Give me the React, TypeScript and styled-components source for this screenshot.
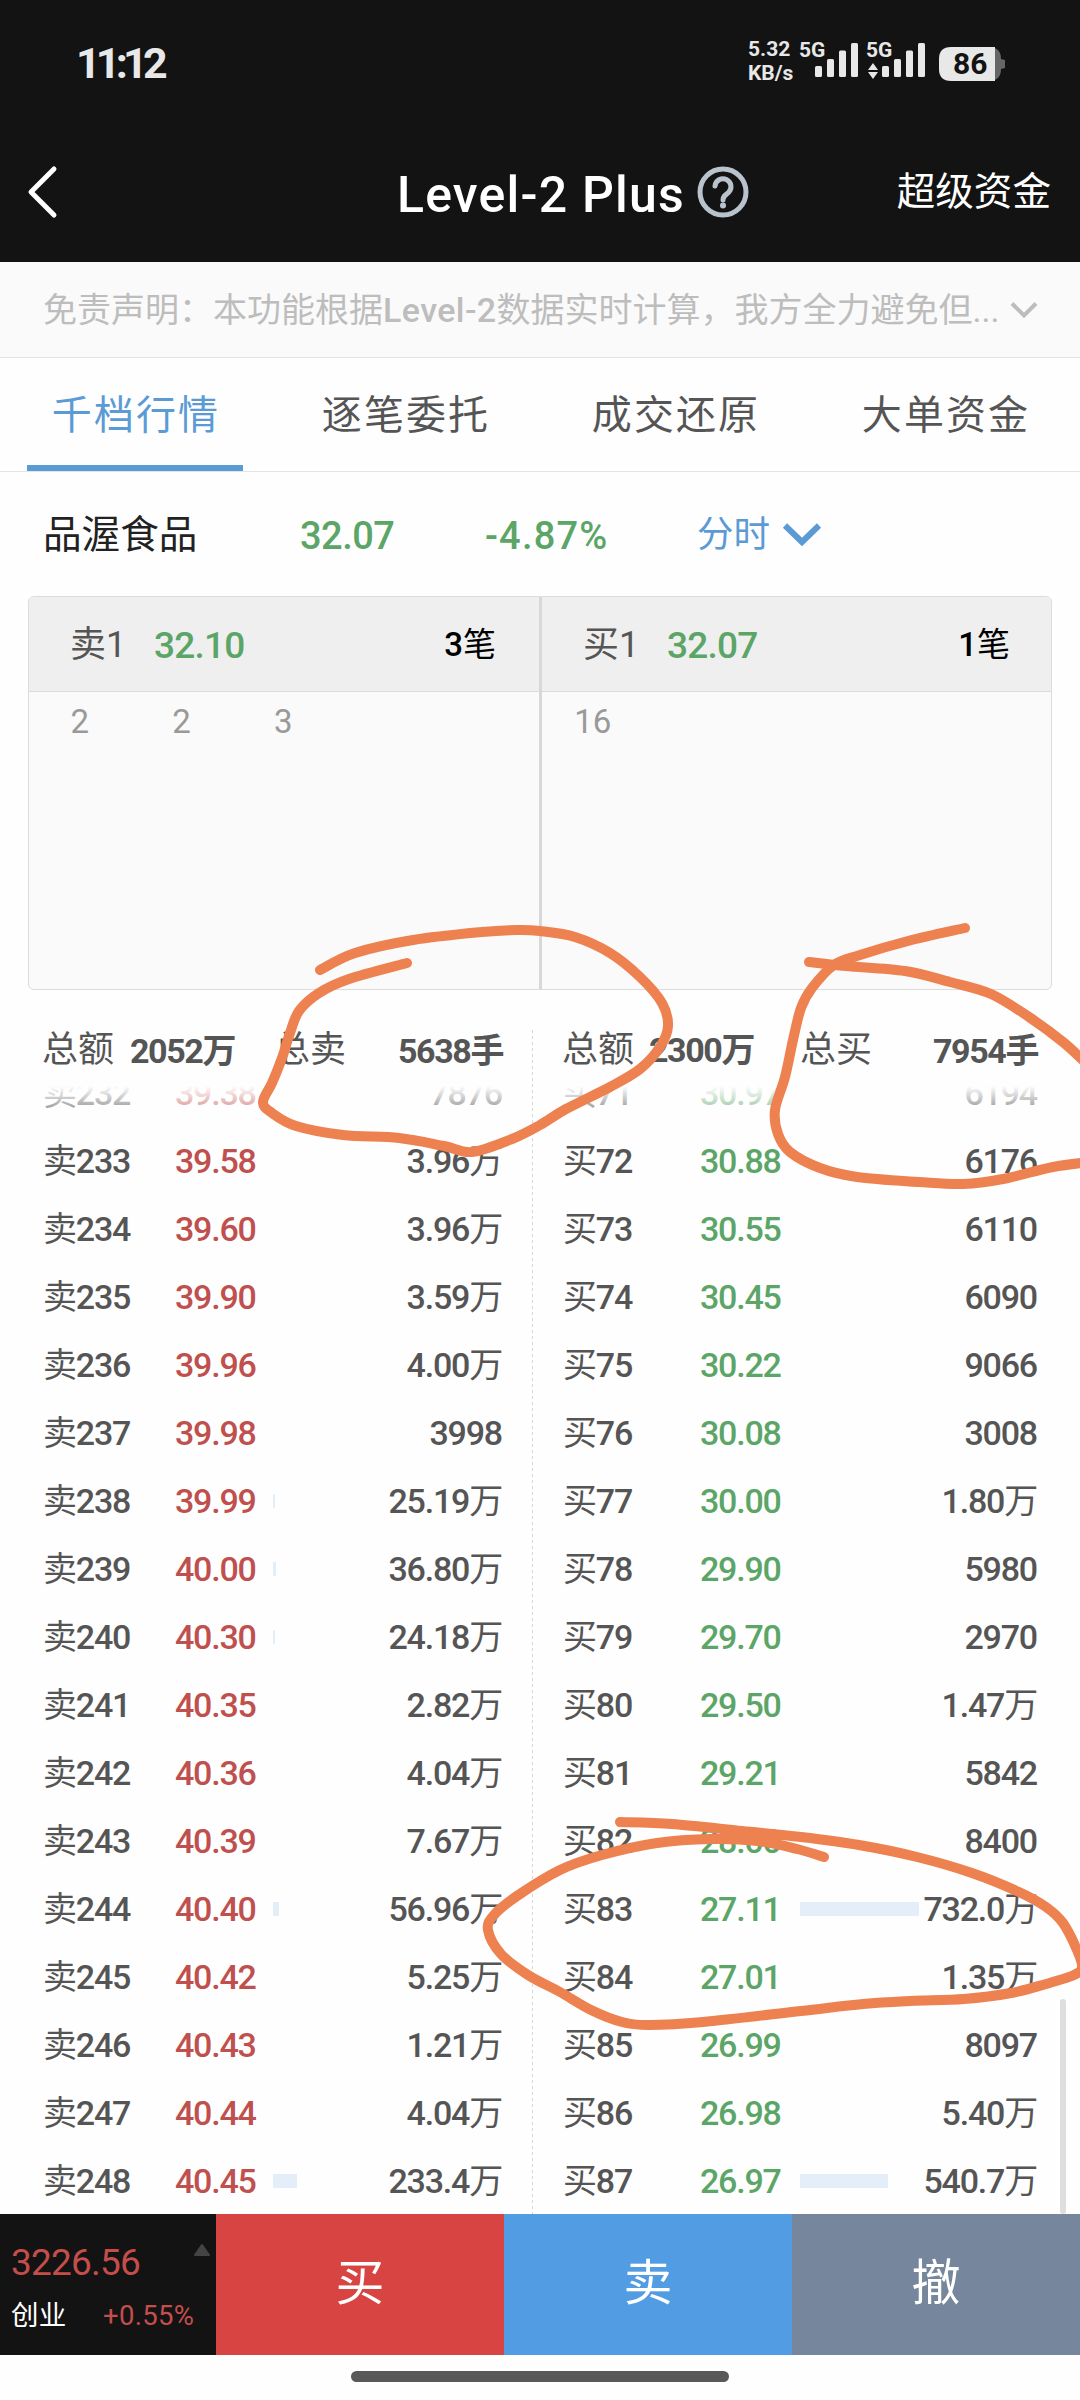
import React from "react";
import styled, { createGlobalStyle } from "styled-components";

const INK = "#555555";
const GREEN = "#5ba567";
const RED = "#bf504d";
const BLUE = "#5b9bd5";
const DARK = "#131313";

const GlobalStyle = createGlobalStyle`
  * { box-sizing: border-box; }
  body {
    margin: 0;
    background: #fefefe;
    font-family: Roboto, "Noto Sans CJK SC", sans-serif;
    line-height: 1.2;
    color: ${INK};
  }
`;

const Screen = styled.div`
  position: relative;
  width: 1080px;
  height: 2400px;
  overflow: hidden;
  display: flex;
  flex-direction: column;
  background: #fefefe;
  white-space: nowrap;
`;

/* Chinese characters set lighter than the digits beside them. */
const Han = styled.span`
  font-weight: 400;
`;

/* ---------- status bar ---------- */

const StatusBar = styled.header`
  height: 128px;
  flex: none;
  display: flex;
  align-items: center;
  padding: 0 76px 0 76px;
  background: ${DARK};
  color: #e8e8e8;
`;

const Clock = styled.div`
  flex: 1;
  font-size: 43px;
  font-weight: 700;
  letter-spacing: -4.8px;
`;

const NetSpeed = styled.div`
  width: 51px;
  height: 52px;
  font-size: 21px;
  font-weight: 700;
  line-height: 23.5px;
`;

const Signal = styled.div<{ $w: number }>`
  position: relative;
  width: ${(p) => p.$w}px;
  height: 50px;
  font-size: 21px;
  font-weight: 700;
  line-height: 23px;
  svg {
    position: absolute;
    left: 0;
    top: 0;
  }
`;

const Battery = styled.div`
  position: relative;
  width: 65px;
  height: 34px;
  display: flex;
  align-items: center;
  padding-left: 14px;
  font-size: 30px;
  font-weight: 700;
  color: ${DARK};
  svg {
    position: absolute;
    left: 0;
    top: 0;
  }
  span {
    position: relative;
  }
`;

/* ---------- navigation ---------- */

const NavBar = styled.nav`
  height: 134px;
  flex: none;
  display: flex;
  align-items: center;
  padding: 0 29px 6px 26px;
  background: ${DARK};
  color: #ffffff;
`;

const BackIcon = styled.svg`
  width: 34px;
  height: 56px;
`;

const Title = styled.h1`
  margin: 6px 0 0 337px;
  width: 300px;
  font-size: 50px;
  font-weight: 500;
  letter-spacing: 1.2px;
`;

const NavLink = styled.a`
  margin-left: auto;
  font-size: 38.6px;
`;

/* ---------- disclaimer ---------- */

const Disclaimer = styled.div`
  height: 96px;
  flex: none;
  display: flex;
  align-items: center;
  padding: 1px 42px 0 43px;
  background: #fafafa;
  border-bottom: 1px solid #e4e4e4;
  color: #bdbdbd;
  font-size: 34px;
  svg {
    margin-left: auto;
  }
`;

const Latin = styled.span`
  font-weight: 500;
  letter-spacing: 0.4px;
`;

/* ---------- tabs ---------- */

const Tabs = styled.div`
  height: 114px;
  flex: none;
  display: grid;
  grid-template-columns: repeat(4, 1fr);
  border-bottom: 1px solid #e4e4e4;
`;

const Tab = styled.div<{ $active?: boolean }>`
  margin: 0 27px;
  display: flex;
  align-items: center;
  justify-content: center;
  padding-top: ${(p) => (p.$active ? "8px" : "2px")};
  padding-left: 2px;
  border-bottom: ${(p) => (p.$active ? `6px solid ${BLUE}` : "none")};
  color: ${(p) => (p.$active ? BLUE : INK)};
  font-size: 40px;
  letter-spacing: 2.1px;
`;

/* ---------- quote line ---------- */

const Quote = styled.div`
  height: 124px;
  flex: none;
  display: flex;
  align-items: center;
  padding: 2px 0 0 43px;
  color: ${GREEN};
  font-size: 38px;
  font-weight: 500;
`;

const StockName = styled.span`
  width: 257px;
  color: #222222;
  font-weight: 400;
  font-size: 38.6px;
`;

const QuotePrice = styled.span`
  width: 185px;
  padding-top: 3px;
  letter-spacing: -0.5px;
`;

const QuoteChange = styled.span`
  width: 212px;
  padding-top: 3px;
  letter-spacing: 1.2px;
`;

const Period = styled.span`
  display: flex;
  align-items: center;
  gap: 12px;
  color: ${BLUE};
  font-weight: 400;
  font-size: 36.5px;
`;

/* ---------- best bid / ask cards ---------- */

const Cards = styled.div`
  height: 394px;
  flex: none;
  margin: 0 28px;
  display: grid;
  grid-template-columns: 513px 511px;
  border: 1px solid #dcdcdc;
  border-radius: 6px;
  overflow: hidden;
  background: #fafafa;
`;

const Card = styled.section<{ $divider?: boolean }>`
  border-right: ${(p) => (p.$divider ? "3px solid #d8d8d8" : "none")};
`;

const CardHead = styled.div`
  height: 95px;
  display: flex;
  align-items: center;
  padding: 2px 43px 0 41px;
  background: #efefef;
  border-bottom: 1px solid #dcdcdc;
  font-size: 36px;
`;

const CardSide = styled.span`
  width: 84px;
  padding-top: 2px;
`;

const CardPrice = styled.span`
  padding-top: 3px;
  color: ${GREEN};
  font-size: 37px;
  font-weight: 500;
  letter-spacing: -0.8px;
`;

const CardCount = styled.span`
  margin-left: auto;
  color: #000000;
  font-size: 33px;
  font-weight: 500;
`;

const Orders = styled.div`
  display: grid;
  grid-template-columns: repeat(5, 101.7px);
  padding-top: 10px;
  color: #999999;
  font-size: 33px;
  text-align: center;
`;

/* ---------- depth table ---------- */

const Totals = styled.div`
  height: 96px;
  flex: none;
  display: flex;
  padding-top: 24px;
`;

const TotalHalf = styled.div<{ $right?: boolean }>`
  width: ${(p) => (p.$right ? "547px" : "533px")};
  display: flex;
  align-items: center;
  padding: ${(p) => (p.$right ? "0 42px 0 29px" : "0 30px 0 42px")};
`;

const TotalLabel = styled.span<{ $w: number }>`
  width: ${(p) => p.$w}px;
  padding-top: 2px;
  font-size: 36px;
`;

const TotalValue = styled.b<{ $w?: number; $raised?: boolean }>`
  width: ${(p) => (p.$w ? `${p.$w}px` : "auto")};
  margin-left: ${(p) => (p.$w ? "0" : "auto")};
  padding-top: ${(p) => (p.$raised ? "0" : "3px")};
  font-size: 34px;
  letter-spacing: -1.4px;
`;

const Depth = styled.main`
  position: relative;
  height: 1128px;
  flex: none;
  overflow: hidden;
  display: flex;
`;

const Side = styled.div<{ $right?: boolean }>`
  width: ${(p) => (p.$right ? "547px" : "533px")};
  margin-top: -27px;
`;

const Row = styled.div<{ $right?: boolean }>`
  height: 68px;
  display: grid;
  align-items: center;
  grid-template-columns: ${(p) => (p.$right ? "137px 100px 1fr" : "132px 98px 1fr")};
  padding: ${(p) => (p.$right ? "0 43px 0 30px" : "0 31px 0 43px")};
  font-size: 34px;
  font-weight: 500;
  letter-spacing: -1.2px;
`;

const Price = styled.span<{ $color: string }>`
  color: ${(p) => p.$color};
`;

const Volume = styled.span`
  display: flex;
  align-items: center;
  justify-content: space-between;
`;

const Bar = styled.i`
  height: 14px;
  background: #e3eef9;
`;

const TopFade = styled.div`
  position: absolute;
  inset: 0 0 auto 0;
  height: 40px;
  background: linear-gradient(#fefefe, rgba(254, 254, 254, 0));
`;

const CenterRule = styled.div`
  position: absolute;
  left: 532px;
  top: 1030px;
  width: 1px;
  height: 1184px;
  background: repeating-linear-gradient(#d6d6d6 0 3px, transparent 3px 6px);
`;

const ScrollThumb = styled.div`
  position: absolute;
  right: 14px;
  bottom: 0;
  width: 6px;
  height: 215px;
  border-radius: 3px;
  background: #dfdddf;
`;

/* ---------- bottom bar ---------- */

const BottomBar = styled.footer`
  height: 141px;
  flex: none;
  display: grid;
  grid-template-columns: 216px repeat(3, 288px);
  background: ${DARK};
`;

const IndexBox = styled.div`
  display: flex;
  flex-direction: column;
  padding: 27px 6px 0 11px;
  color: #c44e4b;
`;

const IndexTop = styled.div`
  display: flex;
  justify-content: space-between;
  font-size: 37px;
  line-height: 44px;
  letter-spacing: -0.8px;
  svg {
    margin-top: 2px;
  }
`;

const IndexBottom = styled.div`
  display: flex;
  align-items: center;
  margin-top: 11px;
  font-size: 27.5px;
  line-height: 40px;
  letter-spacing: 0.3px;
`;

const IndexName = styled.span`
  width: 92px;
  color: #ffffff;
`;

const TradeButton = styled.button<{ $bg: string }>`
  border: 0;
  padding: 0;
  background: ${(p) => p.$bg};
  color: #ffffff;
  font-family: inherit;
  font-size: 49px;
  line-height: 1.2;
`;

const HomeArea = styled.div`
  flex: 1;
  display: flex;
  justify-content: center;
  padding-top: 16px;
`;

const HomePill = styled.div`
  width: 378px;
  height: 11px;
  border-radius: 6px;
  background: #595959;
`;

const Ink = styled.svg`
  position: absolute;
  left: 0;
  top: 0;
  pointer-events: none;
`;

/* ---------- data ---------- */

type Level = [string, string, string, number?];

const asks: Level[] = [
  ["卖232", "39.38", "7876"],
  ["卖233", "39.58", "3.96万"],
  ["卖234", "39.60", "3.96万"],
  ["卖235", "39.90", "3.59万"],
  ["卖236", "39.96", "4.00万"],
  ["卖237", "39.98", "3998"],
  ["卖238", "39.99", "25.19万", 2],
  ["卖239", "40.00", "36.80万", 3],
  ["卖240", "40.30", "24.18万", 2],
  ["卖241", "40.35", "2.82万"],
  ["卖242", "40.36", "4.04万"],
  ["卖243", "40.39", "7.67万"],
  ["卖244", "40.40", "56.96万", 6],
  ["卖245", "40.42", "5.25万"],
  ["卖246", "40.43", "1.21万"],
  ["卖247", "40.44", "4.04万"],
  ["卖248", "40.45", "233.4万", 24],
];

const bids: Level[] = [
  ["买71", "30.97", "6194"],
  ["买72", "30.88", "6176"],
  ["买73", "30.55", "6110"],
  ["买74", "30.45", "6090"],
  ["买75", "30.22", "9066"],
  ["买76", "30.08", "3008"],
  ["买77", "30.00", "1.80万"],
  ["买78", "29.90", "5980"],
  ["买79", "29.70", "2970"],
  ["买80", "29.50", "1.47万"],
  ["买81", "29.21", "5842"],
  ["买82", "28.00", "8400"],
  ["买83", "27.11", "732.0万", 119],
  ["买84", "27.01", "1.35万"],
  ["买85", "26.99", "8097"],
  ["买86", "26.98", "5.40万"],
  ["买87", "26.97", "540.7万", 88],
];

/* Freehand pen strokes, each a list of sampled points. */
const strokes: number[][][] = [
  [[320, 970], [355, 953], [413, 940], [482, 932], [517, 930], [540, 931], [575, 937], [610, 953], [640, 977], [662, 1003], [668, 1026], [660, 1047], [640, 1069], [610, 1087], [566, 1109], [540, 1125], [512, 1139], [472, 1152], [444, 1146], [399, 1138], [343, 1135], [296, 1126], [272, 1113], [263, 1102], [272, 1083], [282, 1058], [290, 1033], [299, 1011], [319, 993], [349, 979], [407, 963]],
  [[809, 962], [846, 966], [905, 971], [950, 982], [991, 994], [1029, 1017], [1063, 1042], [1088, 1065]],
  [[965, 928], [908, 941], [860, 955], [834, 965], [812, 988], [801, 1008], [793, 1040], [785, 1077], [775, 1110], [778, 1134], [790, 1152], [820, 1168], [857, 1177], [919, 1182], [963, 1184], [1003, 1179], [1053, 1167], [1090, 1162]],
  [[620, 1822], [672, 1824], [742, 1831], [801, 1837], [859, 1845], [917, 1857], [972, 1873], [1019, 1892], [1046, 1907], [1063, 1923], [1077, 1950], [1082, 1967], [1074, 1975], [1046, 1984], [1011, 1993], [964, 1999], [910, 2001], [863, 2004], [801, 2011], [703, 2022], [649, 2025], [622, 2022], [591, 2010], [560, 1992], [528, 1975], [501, 1954], [488, 1930], [494, 1915], [517, 1896], [560, 1870], [602, 1855], [657, 1843], [711, 1839], [758, 1841], [797, 1849], [824, 1857]],
];

/* Catmull-Rom spline through the sampled points, as cubic segments. */
function spline(pts: number[][]): string {
  let d = `M${pts[0][0]} ${pts[0][1]}`;
  for (let i = 0; i < pts.length - 1; i++) {
    const p0 = pts[i - 1] ?? pts[i];
    const p1 = pts[i];
    const p2 = pts[i + 1];
    const p3 = pts[i + 2] ?? p2;
    d += `C${p1[0] + (p2[0] - p0[0]) / 6} ${p1[1] + (p2[1] - p0[1]) / 6} ${p2[0] - (p3[0] - p1[0]) / 6} ${p2[1] - (p3[1] - p1[1]) / 6} ${p2[0]} ${p2[1]}`;
  }
  return d;
}

const BARS = [
  [16, 27],
  [28, 20],
  [40, 11.5],
  [52, 4],
];

function SignalBars() {
  return (
    <svg width="64" height="50" fill="#e8e8e8">
      {BARS.map(([x, y]) => (
        <rect key={x} x={x} y={y} width="7" height={38 - y} rx="1.5" />
      ))}
    </svg>
  );
}

/* Splits a label into digit runs and Chinese runs. */
function Mixed({ text }: { text: string }) {
  return (
    <span>
      {text.split(/([\u4e00-\u9fff]+)/).map((run, i) => (i % 2 ? <Han key={i}>{run}</Han> : run))}
    </span>
  );
}

function DepthSide({ rows, right, color }: { rows: Level[]; right?: boolean; color: string }) {
  return (
    <Side $right={right}>
      {rows.map(([label, price, volume, bar]) => (
        <Row key={label} $right={right}>
          <Mixed text={label} />
          <Price $color={color}>{price}</Price>
          <Volume>
            <Bar style={{ width: bar ?? 0 }} />
            <Mixed text={volume} />
          </Volume>
        </Row>
      ))}
    </Side>
  );
}

export default function App() {
  return (
    <Screen>
      <GlobalStyle />
      <StatusBar>
        <Clock>11:12</Clock>
        <NetSpeed>
          5.32
          <br />
          KB/s
        </NetSpeed>
        <Signal $w={67}>
          5G
          <SignalBars />
        </Signal>
        <Signal $w={73}>
          5G
          <SignalBars />
          <svg width="14" height="50" fill="#e8e8e8">
            <path d="M2 31l5-7 5 7zM2 33h10l-5 7z" />
          </svg>
        </Signal>
        <Battery>
          <svg width="66" height="34">
            <path d="M12 0h38q12 0 12 12l4 1v8l-4 1q0 12-12 12h-38z" fill="#666" />
            <path d="M12 0h44v34H12Q0 34 0 22V12Q0 0 12 0z" fill="#e8e8e8" />
          </svg>
          <span>86</span>
        </Battery>
      </StatusBar>

      <NavBar>
        <BackIcon viewBox="0 0 34 56" fill="none" stroke="#fff" strokeWidth="5" strokeLinecap="round" strokeLinejoin="round">
          <path d="M28 5L5 28L28 51" />
        </BackIcon>
        <Title>Level-2 Plus</Title>
        <svg width="52" height="52" viewBox="0 0 52 52" fill="none" stroke="#b9c3ce" strokeWidth="5">
          <circle cx="26" cy="26" r="23" />
          <path d="M18 20a8 8 0 1 1 13.500 6.500c-3.500 2.700-5.500 4-5.500 7.500" strokeLinecap="round" />
          <circle cx="26" cy="39.500" r="3" fill="#b9c3ce" stroke="none" />
        </svg>
        <NavLink>超级资金</NavLink>
      </NavBar>

      <Disclaimer>
        <span>
          免责声明：本功能根据<Latin>Level-2</Latin>数据实时计算，我方全力避免但...
        </span>
        <svg width="28" height="18" fill="none" stroke="#bdbdbd" strokeWidth="4">
          <path d="M2 2.500L14 14.500L26 2.500" />
        </svg>
      </Disclaimer>

      <Tabs>
        <Tab $active>千档行情</Tab>
        <Tab>逐笔委托</Tab>
        <Tab>成交还原</Tab>
        <Tab>大单资金</Tab>
      </Tabs>

      <Quote>
        <StockName>品渥食品</StockName>
        <QuotePrice>32.07</QuotePrice>
        <QuoteChange>-4.87%</QuoteChange>
        <Period>
          分时
          <svg width="40" height="24" fill="none" stroke={BLUE} strokeWidth="6">
            <path d="M3 2.500L20 19L37 2.500" />
          </svg>
        </Period>
      </Quote>

      <Cards>
        <Card $divider>
          <CardHead>
            <CardSide>卖1</CardSide>
            <CardPrice>32.10</CardPrice>
            <CardCount>
              <Mixed text="3笔" />
            </CardCount>
          </CardHead>
          <Orders>
            <span>2</span>
            <span>2</span>
            <span>3</span>
          </Orders>
        </Card>
        <Card>
          <CardHead>
            <CardSide>买1</CardSide>
            <CardPrice>32.07</CardPrice>
            <CardCount>
              <Mixed text="1笔" />
            </CardCount>
          </CardHead>
          <Orders>
            <span>16</span>
          </Orders>
        </Card>
      </Cards>

      <Totals>
        <TotalHalf>
          <TotalLabel $w={88}>总额</TotalLabel>
          <TotalValue $w={144}>2052万</TotalValue>
          <TotalLabel $w={72}>总卖</TotalLabel>
          <TotalValue>5638手</TotalValue>
        </TotalHalf>
        <TotalHalf $right>
          <TotalLabel $w={87}>总额</TotalLabel>
          <TotalValue $w={151} $raised>
            2300万
          </TotalValue>
          <TotalLabel $w={72}>总买</TotalLabel>
          <TotalValue>7954手</TotalValue>
        </TotalHalf>
      </Totals>

      <Depth>
        <DepthSide rows={asks} color={RED} />
        <DepthSide rows={bids} color={GREEN} right />
        <TopFade />
        <ScrollThumb />
      </Depth>

      <BottomBar>
        <IndexBox>
          <IndexTop>
            3226.56
            <svg width="16" height="13" fill="#444" stroke="#444" strokeWidth="2" strokeLinejoin="round">
              <path d="M8 2L15 12H1z" />
            </svg>
          </IndexTop>
          <IndexBottom>
            <IndexName>创业</IndexName>
            +0.55%
          </IndexBottom>
        </IndexBox>
        <TradeButton $bg="#d84442">买</TradeButton>
        <TradeButton $bg="#529ce3">卖</TradeButton>
        <TradeButton $bg="#75869d">撤</TradeButton>
      </BottomBar>

      <HomeArea>
        <HomePill />
      </HomeArea>

      <CenterRule />
      <Ink width="1080" height="2400" fill="none" stroke="#ed8150" strokeWidth="10" strokeLinecap="round" strokeLinejoin="round">
        {strokes.map((pts, i) => (
          <path key={i} d={spline(pts)} />
        ))}
      </Ink>
    </Screen>
  );
}
